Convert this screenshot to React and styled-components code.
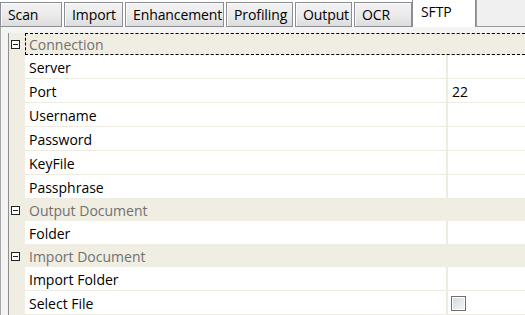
import React from "react";
import styled, { createGlobalStyle } from "styled-components";

const Global = createGlobalStyle`
  html, body { margin: 0; padding: 0; background: #ffffff; overflow: hidden; }
  body { font-family: "Open Sans", "Noto Sans", sans-serif; font-size: 14px; }
`;

const Page = styled.div`
  width: 525px;
  height: 315px;
  display: flex;
  flex-direction: column;
  background: #ffffff;
  overflow: hidden;
`;

const TabStrip = styled.div`
  display: flex;
  align-items: flex-end;
  height: 27px;
  flex: none;
`;

const Tab = styled.div`
  box-sizing: border-box;
  width: ${(p) => p.$w}px;
  margin-right: ${(p) => (p.$gap ?? 2)}px;
  height: ${(p) => (p.$active ? 27 : 25)}px;
  padding-left: ${(p) => (p.$active ? 8 : 7)}px;
  padding-bottom: ${(p) => (p.$active ? 4 : 0)}px;
  display: flex;
  align-items: center;
  border: 1px solid #8c8e94;
  border-bottom: ${(p) => (p.$active ? "none" : "1px solid #8c8e94")};
  border-top: ${(p) => (p.$active ? "none" : "1px solid #8c8e94")};
  background: ${(p) =>
    p.$active ? "#ffffff" : "linear-gradient(#f3f3f3, #ebebeb 50%, #dddddd)"};
  box-shadow: ${(p) => (p.$active ? "none" : "inset 1px 1px 0 #fbfbfb")};
  color: #000;
  white-space: nowrap;
  font-size: 14px;
  letter-spacing: -0.1px;
`;

const TabFiller = styled.div`
  flex: 1;
  height: 27px;
  box-sizing: border-box;
  border-left: 1px solid #9a9a9a;
  border-bottom: 1px solid #9a9a9a;
  background: #f0f0f0;
`;

const Panel = styled.div`
  flex: 1;
  display: flex;
  flex-direction: column;
  padding: 6px 0 0 8px;
  background: #f4f4f4;
  border-left: 1px solid #a6a6a6;
`;

const Grid = styled.div`
  flex: 1;
  display: flex;
  flex-direction: column;
  border-left: 1px solid #8f8f8f;
  border-bottom: 2px solid #9a9a9a;
  background: #f0ede2;
  margin-left: -1px;
`;

const HeaderRow = styled.div`
  height: 22px;
  flex: none;
  display: grid;
  grid-template-columns: 16px 1fr;
  align-items: center;
  background: #f0ede2;
  color: #717171;
`;

const Toggle = styled.span`
  width: 9px;
  height: 9px;
  box-sizing: border-box;
  border: 1px solid #222;
  background: #fff;
  margin-left: 2px;
  display: flex;
  align-items: center;
  justify-content: center;
  &::after {
    content: "";
    width: 5px;
    height: 1px;
    background: #222;
  }
`;

const HeaderLabel = styled.div`
  height: 100%;
  box-sizing: border-box;
  display: flex;
  align-items: center;
  padding: 1px 0 0 3px;
  border: 1px dashed ${(p) => (p.$focus ? "#000" : "transparent")};
  border-right: none;
`;

const ItemRow = styled.div`
  height: 24px;
  flex: none;
  display: grid;
  grid-template-columns: 16px 421px 1fr;
`;

const Gutter = styled.div`
  background: #f0ede2;
`;

const Cell = styled.div`
  box-sizing: border-box;
  background: #ffffff;
  border-bottom: 1px solid #eeebe1;
  display: flex;
  align-items: center;
  padding: 2px 0 0 4px;
  border-left: ${(p) => (p.$value ? "2px solid #eeebe1" : "none")};
  color: #000;
`;

const Check = styled.span`
  width: 15px;
  height: 15px;
  box-sizing: border-box;
  border: 1px solid #6f6f6f;
  box-shadow: inset 0 0 0 1px #ffffff;
  background: linear-gradient(135deg, #d4d8de, #f4f5f7);
  margin: -1px 0 0 -1px;
`;

const tabs = [
  ["Scan", 62],
  ["Import", 59],
  ["Enhancement", 99],
  ["Profiling", 67],
  ["Output", 57],
  ["OCR", 58],
];

const sections = [
  {
    title: "Connection",
    focus: true,
    items: [["Server"], ["Port", "22"], ["Username"], ["Password"], ["KeyFile"], ["Passphrase"]],
  },
  { title: "Output Document", items: [["Folder"]] },
  { title: "Import Document", items: [["Import Folder"], ["Select File", null, true]] },
];

export default function App() {
  return (
    <Page>
      <Global />
      <TabStrip>
        {tabs.map(([t, w]) => (
          <Tab key={t} $w={w} $gap={t === "OCR" ? 0 : 2}>
            {t}
          </Tab>
        ))}
        <Tab $active $w={64} $gap={0}>
          SFTP
        </Tab>
        <TabFiller />
      </TabStrip>
      <Panel>
        <Grid>
          {sections.map((s) => (
            <React.Fragment key={s.title}>
              <HeaderRow>
                <Toggle />
                <HeaderLabel $focus={s.focus}>{s.title}</HeaderLabel>
              </HeaderRow>
              {s.items.map(([label, value, check]) => (
                <ItemRow key={label}>
                  <Gutter />
                  <Cell>{label}</Cell>
                  <Cell $value>{check ? <Check /> : value}</Cell>
                </ItemRow>
              ))}
            </React.Fragment>
          ))}
        </Grid>
      </Panel>
    </Page>
  );
}
